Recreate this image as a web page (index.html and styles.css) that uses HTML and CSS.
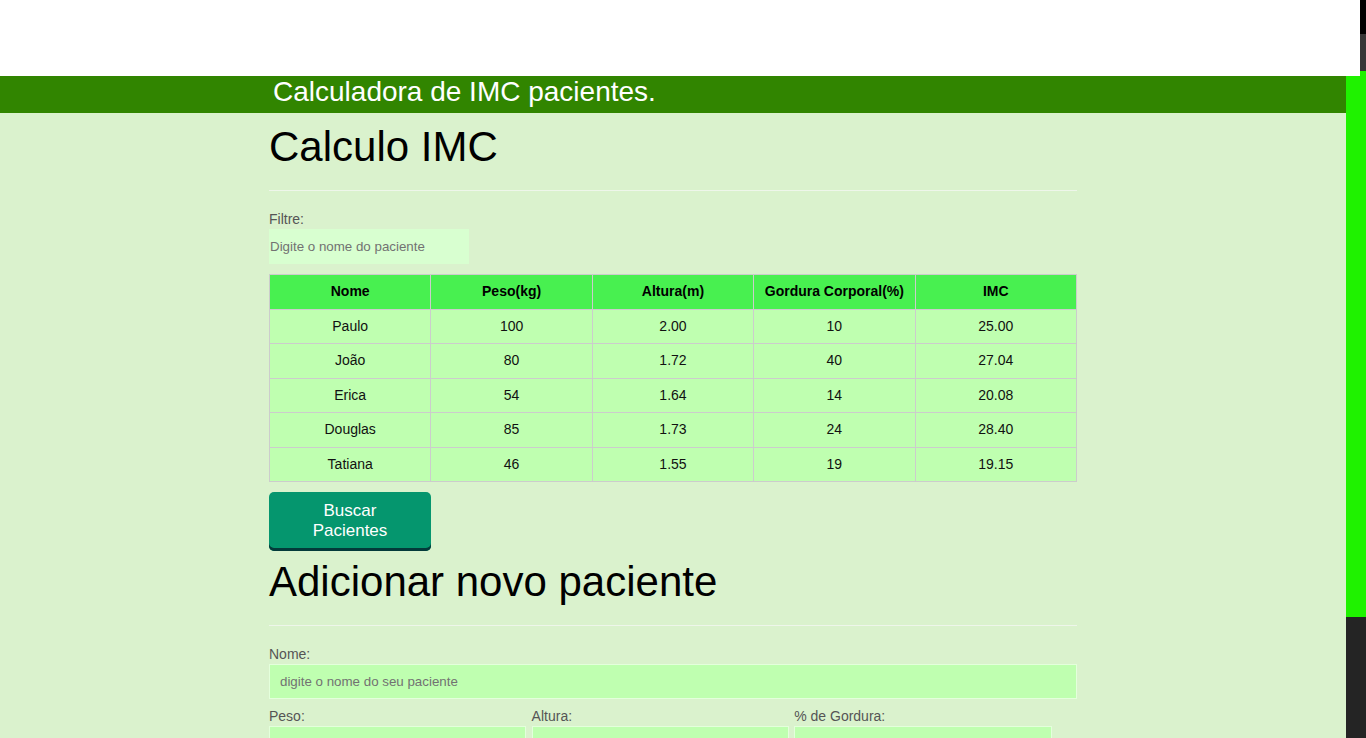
FILE: index.html
```
<!DOCTYPE html>
<html lang="pt-BR">
<head>
<meta charset="utf-8">
<title>Calculadora de IMC</title>
<link rel="stylesheet" href="styles.css">
</head>
<body>
<div class="page">
  <div class="main">
    <div class="topspace"></div>
    <header class="banner">
      <div class="container">
        <h2 class="banner-title">Calculadora de IMC pacientes.</h2>
      </div>
    </header>
    <main class="container">
      <section>
        <h1 class="title">Calculo IMC</h1>
        <hr class="rule">
        <label class="label" for="filtro">Filtre:</label>
        <input class="filter" id="filtro" type="text" placeholder="Digite o nome do paciente">
        <table class="grid">
          <thead>
            <tr><th>Nome</th><th>Peso(kg)</th><th>Altura(m)</th><th>Gordura Corporal(%)</th><th>IMC</th></tr>
          </thead>
          <tbody>
            <tr><td>Paulo</td><td>100</td><td>2.00</td><td>10</td><td>25.00</td></tr>
            <tr><td>João</td><td>80</td><td>1.72</td><td>40</td><td>27.04</td></tr>
            <tr><td>Erica</td><td>54</td><td>1.64</td><td>14</td><td>20.08</td></tr>
            <tr><td>Douglas</td><td>85</td><td>1.73</td><td>24</td><td>28.40</td></tr>
            <tr><td>Tatiana</td><td>46</td><td>1.55</td><td>19</td><td>19.15</td></tr>
          </tbody>
        </table>
        <button class="btn" type="button">Buscar Pacientes</button>
      </section>
      <section>
        <h1 class="title title-second">Adicionar novo paciente</h1>
        <hr class="rule">
        <form class="form">
          <div class="field">
            <label class="label" for="nome">Nome:</label>
            <input class="input input-full" id="nome" type="text" placeholder="digite o nome do seu paciente">
          </div>
          <div class="row">
            <div class="col">
              <label class="label" for="peso">Peso:</label>
              <input class="input" id="peso" type="text">
            </div>
            <div class="col">
              <label class="label" for="altura">Altura:</label>
              <input class="input" id="altura" type="text">
            </div>
            <div class="col">
              <label class="label" for="gordura">% de Gordura:</label>
              <input class="input" id="gordura" type="text">
            </div>
          </div>
        </form>
      </section>
    </main>
  </div>
  <div class="scrollbar">
    <div class="sb-left">
      <div class="sb-white"></div>
      <div class="sb-thumb sb-thumb-left"></div>
      <div class="sb-track"></div>
    </div>
    <div class="sb-right">
      <div class="sb-black"></div>
      <div class="sb-gray"></div>
      <div class="sb-thumb sb-thumb-right"></div>
      <div class="sb-track"></div>
    </div>
  </div>
</div>
</body>
</html>
```
FILE: styles.css
```
html, body {
  margin: 0;
  padding: 0;
  height: 738px;
  overflow: hidden;
}
body {
  font-family: "Liberation Sans", Arial, sans-serif;
  background: #daf2cd;
  color: #000;
}
.page {
  display: flex;
  height: 738px;
}
.main {
  flex: 1;
  min-width: 0;
  overflow: hidden;
  background: #daf2cd;
}
.topspace {
  height: 76px;
  background: #ffffff;
}
.banner {
  height: 37px;
  background: #318500;
}
.container {
  width: 808px;
  margin: 0 auto;
}
.banner-title {
  margin: 0;
  padding-left: 4px;
  font-size: 28px;
  font-weight: normal;
  line-height: 32px;
  color: #ffffff;
}
.title {
  margin: 11px 0 0;
  font-size: 42px;
  font-weight: normal;
  line-height: 46.2px;
  color: #000;
}
.title-second {
  margin-top: 8px;
}
.rule {
  margin: 20px 0 19px;
  border: 0;
  border-top: 1px solid #eef6ea;
  height: 0;
}
.label {
  display: block;
  font-size: 14px;
  line-height: 19px;
  color: #555;
}
.filter {
  display: block;
  box-sizing: border-box;
  width: 200px;
  height: 35px;
  margin: 0;
  padding: 0 1px;
  border: 0;
  background: #d8ffd0;
  font-family: inherit;
  font-size: 13.333px;
  color: #333;
  outline: none;
}
.filter::placeholder,
.input::placeholder {
  color: #727272;
  opacity: 1;
}
.grid {
  width: 808px;
  margin-top: 10px;
  border-collapse: collapse;
  table-layout: fixed;
  font-size: 14px;
}
.grid th,
.grid td {
  border: 1px solid #cccccc;
  padding: 8px 4px;
  line-height: 17.5px;
  text-align: center;
}
.grid th {
  background: #48f050;
  font-weight: bold;
  color: #000;
}
.grid td {
  background: #bfffb0;
  color: #111;
}
.btn {
  display: block;
  width: 162px;
  height: 59px;
  margin-top: 10px;
  padding: 0 30px 1px;
  border: 0;
  border-radius: 5px;
  background: #05966e;
  box-shadow: inset 0 -3px 0 #033a3a;
  font-family: inherit;
  font-size: 17px;
  line-height: 20px;
  color: #ffffff;
  text-align: center;
  cursor: pointer;
}
.form {
  margin: 0;
}
.field {
  margin-bottom: 8px;
}
.input {
  display: block;
  box-sizing: border-box;
  width: 98%;
  height: 35px;
  margin: 0;
  padding: 0 10px;
  border: 1px solid #e4ffdc;
  background: #bfffb0;
  font-family: inherit;
  font-size: 13.333px;
  color: #333;
  outline: none;
}
.input-full {
  width: 100%;
}
.row {
  display: flex;
}
.col {
  width: 32.5%;
}
.scrollbar {
  display: flex;
  width: 20px;
  flex: none;
}
.sb-left {
  width: 14px;
  display: flex;
  flex-direction: column;
}
.sb-right {
  width: 6px;
  display: flex;
  flex-direction: column;
}
.sb-white {
  height: 76px;
  background: #ffffff;
}
.sb-black {
  height: 34px;
  background: #000000;
}
.sb-gray {
  height: 37px;
  background: #363636;
}
.sb-thumb {
  background: #1ff200;
}
.sb-thumb-left {
  height: 541px;
}
.sb-thumb-right {
  height: 546px;
}
.sb-track {
  flex: 1;
  background: #242424;
}
```
